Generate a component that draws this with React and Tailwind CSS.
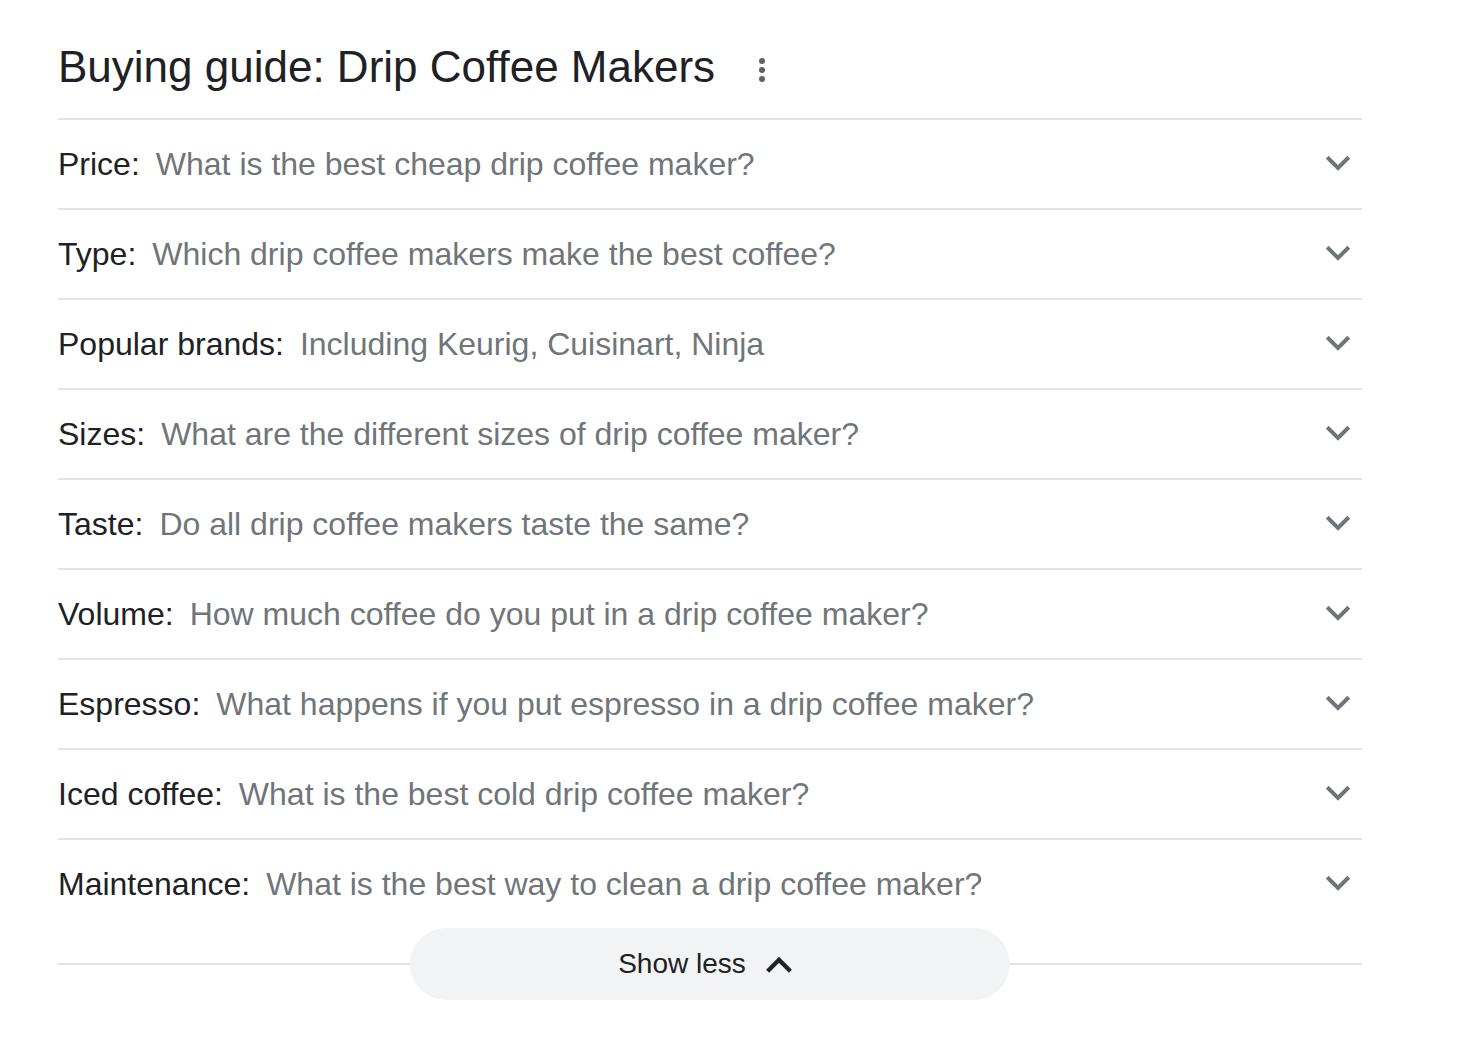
const ROWS = [
  ['Price', 'What is the best cheap drip coffee maker?'],
  ['Type', 'Which drip coffee makers make the best coffee?'],
  ['Popular brands', 'Including Keurig, Cuisinart, Ninja'],
  ['Sizes', 'What are the different sizes of drip coffee maker?'],
  ['Taste', 'Do all drip coffee makers taste the same?'],
  ['Volume', 'How much coffee do you put in a drip coffee maker?'],
  ['Espresso', 'What happens if you put espresso in a drip coffee maker?'],
  ['Iced coffee', 'What is the best cold drip coffee maker?'],
  ['Maintenance', 'What is the best way to clean a drip coffee maker?'],
];

function Chevron({ up = false, className = '' }) {
  return (
    <svg viewBox="0 0 24 24" className={className} fill="none" stroke="currentColor" strokeWidth="3" strokeLinecap="square">
      {up ? <path d="M5 16l7-7 7 7" /> : <path d="M5 8l7 7 7-7" />}
    </svg>
  );
}

export default function App() {
  return (
    <div className="min-h-screen bg-white font-['Liberation_Sans',Arial,sans-serif]">
      <div className="ml-[58px] w-[1304px] pt-[36px]">
        <div className="flex items-center h-[62px] mb-[20px]">
          <h1 className="text-[44px] leading-[62px] text-[#202124]">Buying guide: Drip Coffee Makers</h1>
          <div className="ml-[44px] flex flex-col gap-[3px] mt-[6px]">
            <span className="w-[6px] h-[6px] rounded-full bg-[#5f6368]"></span>
            <span className="w-[6px] h-[6px] rounded-full bg-[#5f6368]"></span>
            <span className="w-[6px] h-[6px] rounded-full bg-[#5f6368]"></span>
          </div>
        </div>

        {ROWS.map(([label, question]) => (
          <div key={label} className="h-[90px] border-t-2 border-[#e3e3e3] flex items-center justify-between">
            <p className="text-[32px] leading-[38px]">
              <span className="text-[#202124]">{label}:</span>
              <span className="ml-[16px] text-[#70757a]">{question}</span>
            </p>
            <Chevron className="w-[32px] h-[32px] mr-[8px] text-[#70757a]" />
          </div>
        ))}

        <div className="flex items-center h-[72px]">
          <div className="flex-1 h-[2px] bg-[#e3e3e3]"></div>
          <button className="w-[600px] h-[72px] pr-[6px] rounded-full bg-[#f1f3f4] flex items-center justify-center gap-[16px] text-[#202124]">
            <span className="text-[28px] leading-[34px]">Show less</span>
            <Chevron up className="w-[34px] h-[34px]" />
          </button>
          <div className="flex-1 h-[2px] bg-[#e3e3e3]"></div>
        </div>
      </div>
    </div>
  );
}
